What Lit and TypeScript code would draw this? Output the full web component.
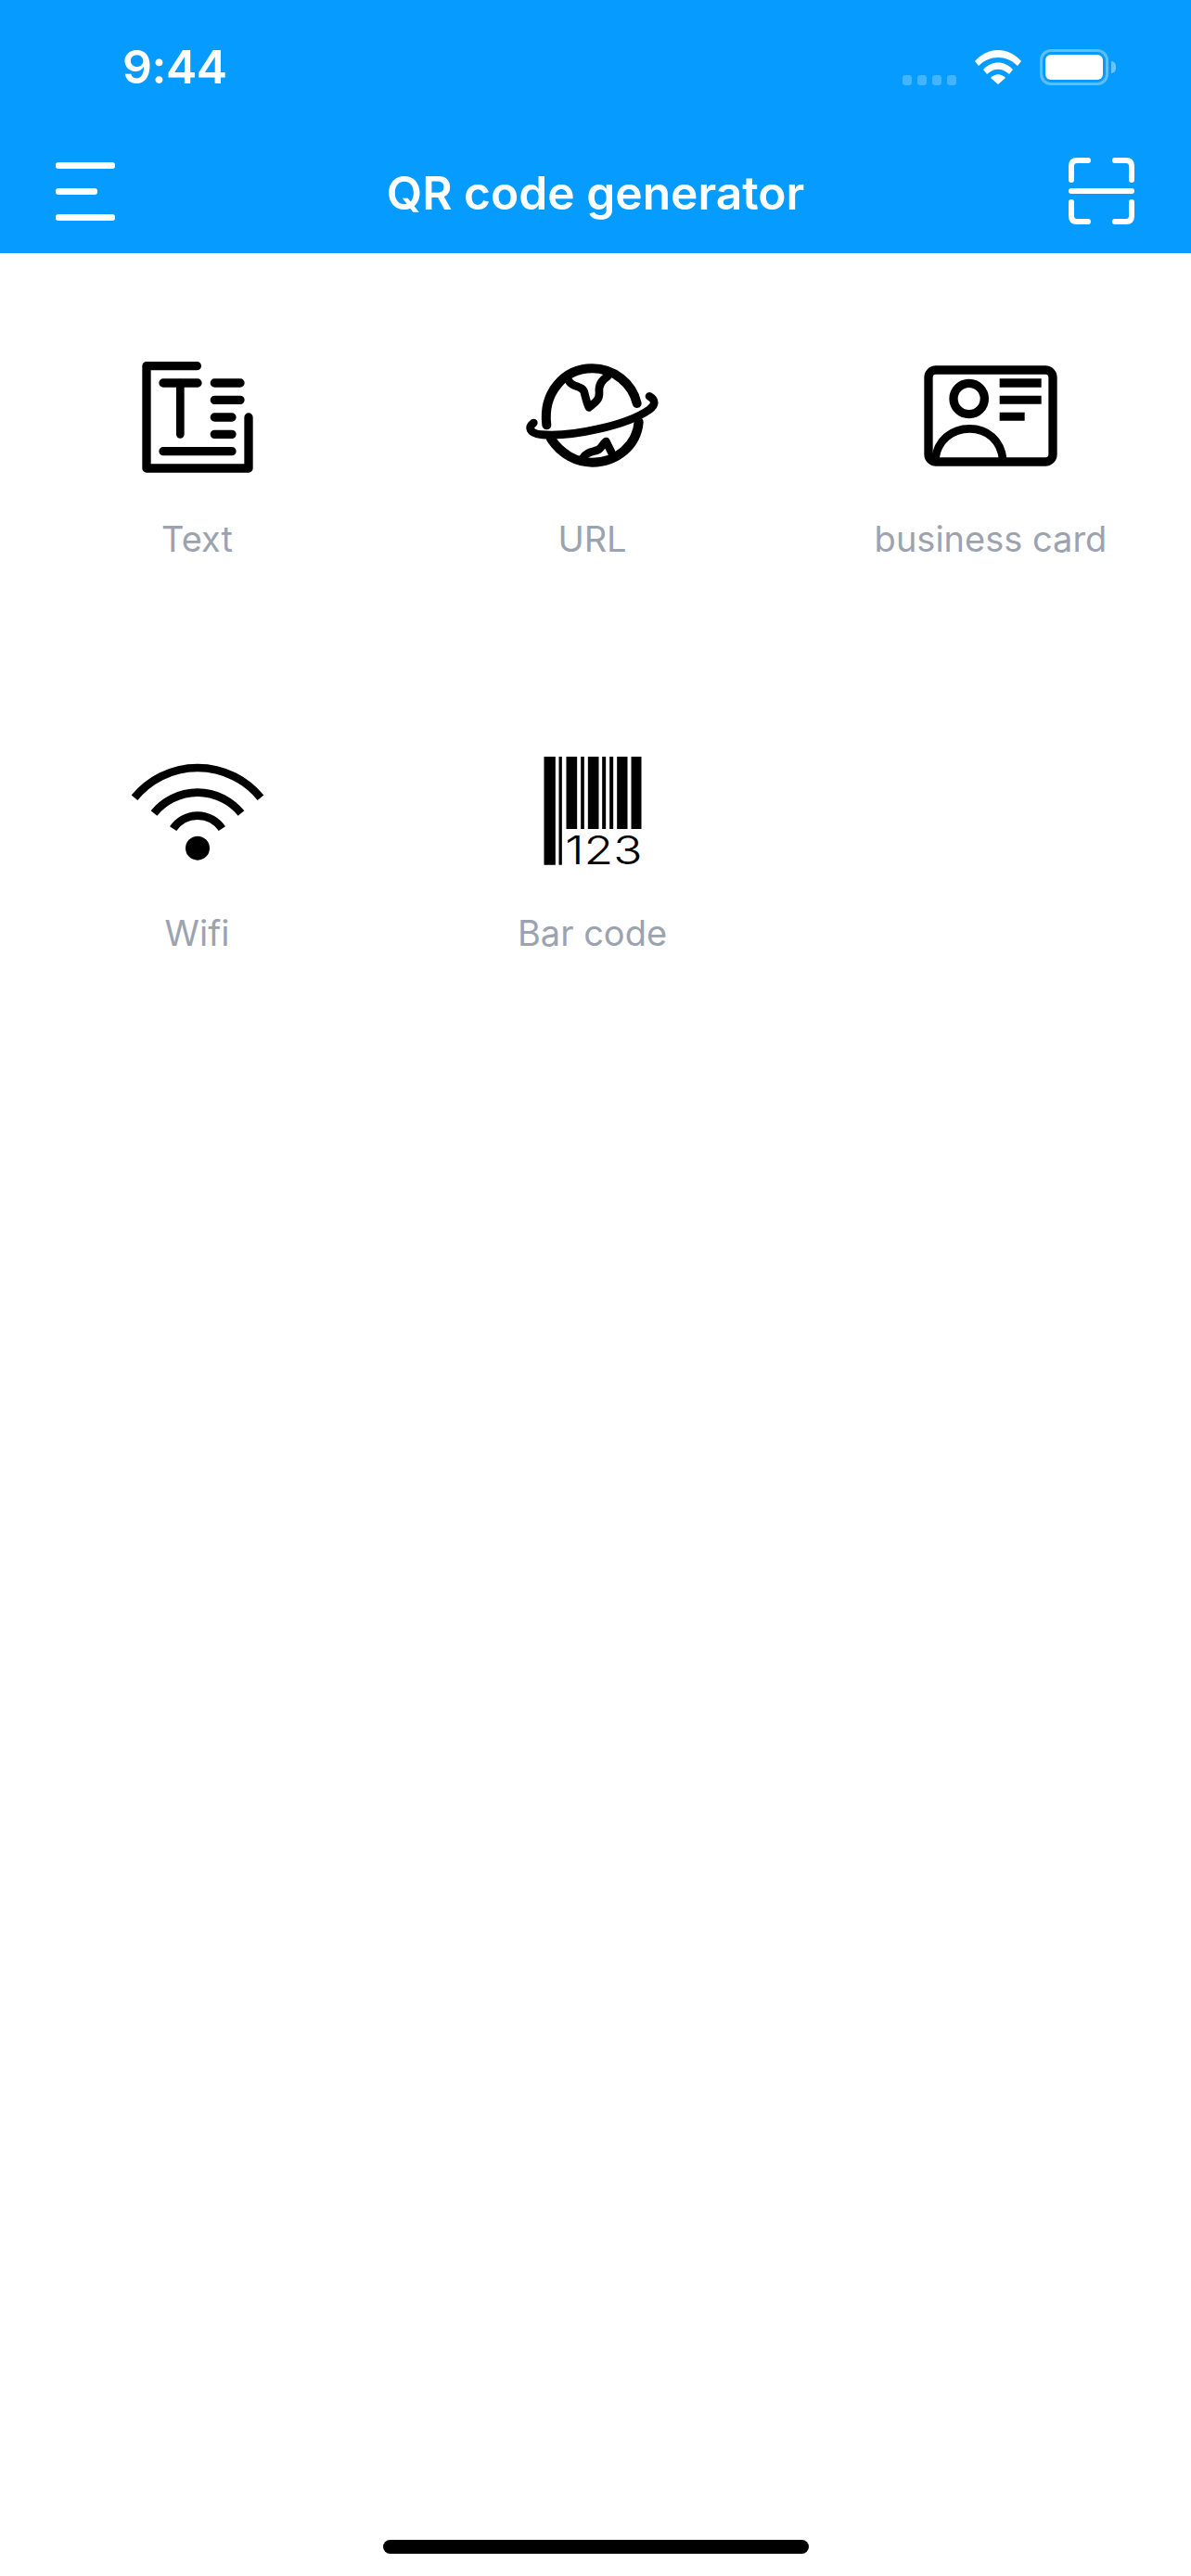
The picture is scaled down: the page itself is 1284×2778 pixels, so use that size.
import { LitElement, html, css, svg } from "lit";
import { customElement } from "lit/decorators.js";

const icons = {
  text: { w: 160, h: 160, vx: 9, body: svg`
    <g fill="none" stroke="#000" stroke-linecap="round" stroke-linejoin="round">
      <path stroke-width="28" d="M247 74H84V405H414V240"/>
      <path stroke-width="28" d="M138 129H249M304 129H387M304 184H387M304 240H360M304 295H360M138 350H360"/>
      <path stroke-width="26" d="M193 129V295"/>
    </g>` },
  url: { w: 180, h: 160, vx: -3, body: svg`
    <g fill="none" stroke="#000" stroke-linecap="round" stroke-linejoin="round">
      <path stroke-width="30" d="M118 265C105 160 175 82 265 82C335 82 395 130 410 195"/>
      <path stroke-width="30" d="M132 310C165 360 215 386 265 386C345 386 410 330 416 255"/>
      <path stroke-width="26" d="M76 258C58 272 60 292 100 296C200 305 380 265 450 215C470 200 472 185 450 172"/>
      <path stroke-width="26" d="M190 122C200 145 235 135 240 160C245 180 248 195 255 208C270 195 290 185 288 160C285 135 295 120 315 108"/>
      <path stroke-width="26" d="M235 372C245 352 270 352 285 345C295 340 300 325 310 318L330 358"/>
    </g>` },
  card: { w: 170, h: 160, vx: 8, body: svg`
    <g fill="none" stroke="#000">
      <rect x="62" y="87" width="402" height="297" rx="24" stroke-width="28"/>
      <circle cx="193" cy="180" r="50" stroke-width="28"/>
      <path stroke-width="26" d="M84 378C90 312 140 277 195 277C250 277 296 312 303 378"/>
    </g>
    <path d="M292 115H427V143H292ZM292 170H427V197H292ZM292 224H373V251H292Z"/>` },
  wifi: { w: 160, h: 150, vx: 9, body: svg`
    <g fill="none" stroke="#000" stroke-width="26">
      <path d="M45 181A263 263 0 0 1 453 181"/>
      <path d="M108 231A182 182 0 0 1 390 231"/>
      <path d="M170 281A95 95 0 0 1 328 281"/>
    </g>
    <circle cx="249" cy="344" r="39"/>` },
  bar: { w: 140, h: 150, vx: -4.5, body: svg`
    <path d="M48 48H85V398H48ZM96 48H106V398H96ZM120 48H155V282H120ZM167 48H178V282H167ZM190 48H225V282H190ZM236 48H248V282H236ZM260 48H272V282H260ZM284 48H318V282H284ZM330 48H363V282H330Z"/>
    <text class="digits" x="116" y="397" textLength="250" lengthAdjust="spacingAndGlyphs">123</text>` },
};

const items = [
  { icon: icons.text, label: "Text" },
  { icon: icons.url, label: "URL" },
  { icon: icons.card, label: "business card" },
  { icon: icons.wifi, label: "Wifi" },
  { icon: icons.bar, label: "Bar code" },
];

@customElement("app-root")
export class AppRoot extends LitElement {
  static styles = css`
    :host {
      display: block;
      width: 1284px;
      height: 2778px;
      background: #fff;
      font-family: Inter, "Liberation Sans", sans-serif;
      overflow: hidden;
    }
    .page { display: flex; flex-direction: column; height: 100%; }
    .header { background: #059bff; color: #fff; height: 273px; display: flex; flex-direction: column; flex: none; }
    .status { height: 144px; display: flex; align-items: flex-start; justify-content: space-between; padding: 0 81px 0 132px; box-sizing: border-box; flex: none; }
    .time { font-size: 50px; font-weight: 600; line-height: 60px; margin-top: 42px; letter-spacing: -0.5px; }
    .status-right { display: flex; align-items: flex-start; margin-top: 53px; }
    .dots { display: flex; gap: 6px; margin-top: 28px; margin-right: 20px; }
    .dots span { width: 10px; height: 11px; border-radius: 3px; background: rgba(255,255,255,.25); }
    .wifi { margin-right: 20px; display: block; }
    .battery { width: 74px; height: 39px; box-sizing: border-box; border: 3px solid rgba(255,255,255,.35); border-radius: 12px; padding: 3px; }
    .battery i { display: block; width: 100%; height: 100%; background: #fff; border-radius: 6px; }
    .cap { width: 5px; height: 13px; margin: 13px 0 0 3px; background: rgba(255,255,255,.4); border-radius: 0 6px 6px 0; }
    .nav { flex: 1; display: grid; grid-template-columns: 1fr auto 1fr; align-items: flex-start; padding: 26px 61px 0 60px; }
    .title { font-size: 49.7px; font-weight: 600; line-height: 60px; margin-top: 8px; margin-left: 1px; }
    .menu { display: flex; flex-direction: column; gap: 21px; width: 64px; margin-top: 5px; }
    .menu span { height: 7px; background: #fff; border-radius: 3px; }
    .menu span:nth-child(2) { width: 45px; }
    .scan { justify-self: end; display: block; }
    .grid { display: grid; grid-template-columns: 425px 427px 432px; grid-auto-rows: 425px; }
    .cell { display: flex; flex-direction: column; align-items: center; padding-top: 97px; box-sizing: border-box; }
    .iconbox { height: 160px; display: flex; align-items: center; justify-content: center; }
    .cell svg { display: block; }
    .cell svg .digits { font-family: Inter, sans-serif; font-weight: 300; font-size: 128px; }
    .label { color: #9ca3af; font-size: 38px; line-height: 46px; margin-top: 28px; }
    .spacer { flex: 1; }
    .indicator { flex: none; width: 459px; height: 15px; border-radius: 8px; background: #000; margin: 0 auto 24px; }
  `;

  render() {
    return html`<div class="page">
      <div class="header">
        <div class="status">
          <div class="time">9:44</div>
          <div class="status-right">
            <div class="dots"><span></span><span></span><span></span><span></span></div>
            <svg class="wifi" width="50" height="38" viewBox="0 0 50 38" fill="#fff">
              <path d="M0 13C14 -3 36 -3 50 13L46 18C34 6 16 6 4 18Z"/>
              <path d="M9 22C18 12 32 12 41 22L37 27C29 20 21 20 13 27Z"/>
              <path d="M17 31C22 26 28 26 33 31L25 38Z"/>
            </svg>
            <div class="battery"><i></i></div>
            <div class="cap"></div>
          </div>
        </div>
        <div class="nav">
          <div class="menu"><span></span><span></span><span></span></div>
          <div class="title">QR code generator</div>
          <svg class="scan" width="71" height="72" viewBox="0 0 71 72" fill="none" stroke="#fff" stroke-width="6" stroke-linecap="round" stroke-linejoin="round">
            <path d="M3 24V9Q3 3 9 3H21M50 3H62Q68 3 68 9V24M3 48V63Q3 69 9 69H21M50 69H62Q68 69 68 63V48M3 36H68"/>
          </svg>
        </div>
      </div>
      <div class="grid">
        ${items.map(
          (it) => html`<div class="cell">
            <div class="iconbox">
              <svg width=${it.icon.w} height=${it.icon.h} viewBox="${it.icon.vx} 0 ${it.icon.w * 3} ${it.icon.h * 3}">${it.icon.body}</svg>
            </div>
            <div class="label">${it.label}</div>
          </div>`
        )}
      </div>
      <div class="spacer"></div>
      <div class="indicator"></div>
    </div>`;
  }
}
